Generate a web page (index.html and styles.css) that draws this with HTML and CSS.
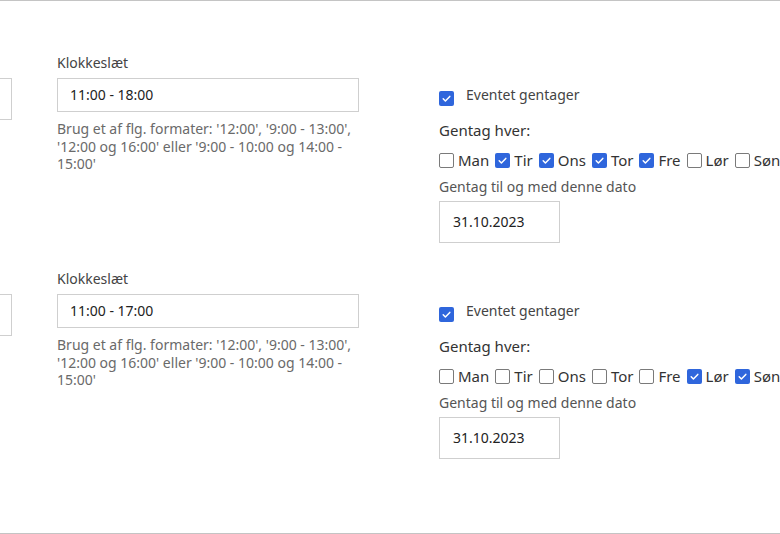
FILE: index.html
```html
<!DOCTYPE html>
<html lang="da">
<head>
<meta charset="utf-8">
<title>Gentagelse</title>
<link rel="stylesheet" href="styles.css">
</head>
<body>
<div class="page">
  <div class="row">
    <div class="col-a"><div class="input partial"></div></div>
    <div class="col-b">
      <div class="label">Klokkeslæt</div>
      <div class="input time">11:00 - 18:00</div>
      <div class="help">Brug et af flg. formater: '12:00', '9:00 - 13:00', '12:00 og 16:00' eller '9:00 - 10:00 og 14:00 - 15:00'</div>
    </div>
    <div class="col-c">
      <div class="repeat"><span class="cb on"><svg viewBox="0 0 15 15" width="15" height="15"><path d="M4.2 7.8 L6.4 10 L10.8 5.4" fill="none" stroke="#fff" stroke-width="1.5" stroke-linecap="round" stroke-linejoin="round"/></svg></span><span class="repeat-text">Eventet gentager</span></div>
      <div class="every">Gentag hver:</div>
      <div class="days">
        <span class="day"><span class="cb"></span>Man</span>
        <span class="day"><span class="cb on"><svg viewBox="0 0 15 15" width="15" height="15"><path d="M4.2 7.8 L6.4 10 L10.8 5.4" fill="none" stroke="#fff" stroke-width="1.5" stroke-linecap="round" stroke-linejoin="round"/></svg></span>Tir</span>
        <span class="day"><span class="cb on"><svg viewBox="0 0 15 15" width="15" height="15"><path d="M4.2 7.8 L6.4 10 L10.8 5.4" fill="none" stroke="#fff" stroke-width="1.5" stroke-linecap="round" stroke-linejoin="round"/></svg></span>Ons</span>
        <span class="day"><span class="cb on"><svg viewBox="0 0 15 15" width="15" height="15"><path d="M4.2 7.8 L6.4 10 L10.8 5.4" fill="none" stroke="#fff" stroke-width="1.5" stroke-linecap="round" stroke-linejoin="round"/></svg></span>Tor</span>
        <span class="day"><span class="cb on"><svg viewBox="0 0 15 15" width="15" height="15"><path d="M4.2 7.8 L6.4 10 L10.8 5.4" fill="none" stroke="#fff" stroke-width="1.5" stroke-linecap="round" stroke-linejoin="round"/></svg></span>Fre</span>
        <span class="day"><span class="cb"></span>Lør</span>
        <span class="day"><span class="cb"></span>Søn</span>
      </div>
      <div class="until">Gentag til og med denne dato</div>
      <div class="input date">31.10.2023</div>
    </div>
  </div>
  <div class="row">
    <div class="col-a"><div class="input partial"></div></div>
    <div class="col-b">
      <div class="label">Klokkeslæt</div>
      <div class="input time">11:00 - 17:00</div>
      <div class="help">Brug et af flg. formater: '12:00', '9:00 - 13:00', '12:00 og 16:00' eller '9:00 - 10:00 og 14:00 - 15:00'</div>
    </div>
    <div class="col-c">
      <div class="repeat"><span class="cb on"><svg viewBox="0 0 15 15" width="15" height="15"><path d="M4.2 7.8 L6.4 10 L10.8 5.4" fill="none" stroke="#fff" stroke-width="1.5" stroke-linecap="round" stroke-linejoin="round"/></svg></span><span class="repeat-text">Eventet gentager</span></div>
      <div class="every">Gentag hver:</div>
      <div class="days">
        <span class="day"><span class="cb"></span>Man</span>
        <span class="day"><span class="cb"></span>Tir</span>
        <span class="day"><span class="cb"></span>Ons</span>
        <span class="day"><span class="cb"></span>Tor</span>
        <span class="day"><span class="cb"></span>Fre</span>
        <span class="day"><span class="cb on"><svg viewBox="0 0 15 15" width="15" height="15"><path d="M4.2 7.8 L6.4 10 L10.8 5.4" fill="none" stroke="#fff" stroke-width="1.5" stroke-linecap="round" stroke-linejoin="round"/></svg></span>Lør</span>
        <span class="day"><span class="cb on"><svg viewBox="0 0 15 15" width="15" height="15"><path d="M4.2 7.8 L6.4 10 L10.8 5.4" fill="none" stroke="#fff" stroke-width="1.5" stroke-linecap="round" stroke-linejoin="round"/></svg></span>Søn</span>
      </div>
      <div class="until">Gentag til og med denne dato</div>
      <div class="input date">31.10.2023</div>
    </div>
  </div>
</div>
</body>
</html>
```

FILE: styles.css
```css
html, body {
  margin: 0;
  padding: 0;
  background: #fff;
  overflow: hidden;
}
body {
  width: 780px;
  height: 534px;
  font-family: "Noto Sans", "Open Sans", sans-serif;
  font-size: 14px;
  color: #333;
}
.page {
  height: 534px;
  box-sizing: border-box;
  border-top: 1px solid #c4c4c4;
  border-bottom: 1px solid #c4c4c4;
  overflow: hidden;
}
.row {
  display: flex;
  height: 216px;
  align-items: flex-start;
}
.col-a {
  flex: 0 0 200px;
  margin-left: -188px;
  padding-top: 77px;
}
.input {
  box-sizing: border-box;
  border: 1px solid #cfcfcf;
  background: #fff;
  color: #222;
  font-size: 14px;
}
.partial {
  height: 42px;
}
.col-b {
  flex: 0 0 302px;
  margin-left: 45px;
  padding-top: 52px;
}
.label {
  line-height: 20px;
  color: #444;
  margin-bottom: 5px;
}
.time {
  height: 34px;
  line-height: 32px;
  padding-left: 12px;
}
.help {
  margin-top: 8px;
  line-height: 17.5px;
  color: #6a6a6a;
  width: 296px;
}
.col-c {
  margin-left: 80px;
  padding-top: 84px;
  white-space: nowrap;
}
.repeat {
  display: flex;
  align-items: flex-start;
  height: 22px;
}
.repeat .cb {
  margin-top: 6px;
}
.repeat-text {
  margin-left: 12px;
  line-height: 20px;
  color: #444;
}
.cb {
  flex: 0 0 auto;
  box-sizing: border-box;
  width: 15px;
  height: 15px;
  border: 1px solid #7a7a7a;
  border-radius: 2px;
  background: #fff;
  display: inline-block;
}
.cb.on {
  border: none;
  background: #2f66dc;
}
.cb svg {
  display: block;
}
.every {
  margin-top: 12px;
  font-size: 15px;
  line-height: 22px;
  color: #333;
}
.days {
  margin-top: 9px;
  display: flex;
  align-items: center;
  height: 20px;
  font-size: 15px;
  color: #333;
}
.day {
  display: inline-flex;
  align-items: center;
  gap: 4px;
  margin-right: 6px;
}
.until {
  margin-top: 7px;
  line-height: 20px;
  color: #555;
}
.date {
  margin-top: 4px;
  width: 121px;
  height: 42px;
  line-height: 40px;
  padding-left: 13px;
}
```
